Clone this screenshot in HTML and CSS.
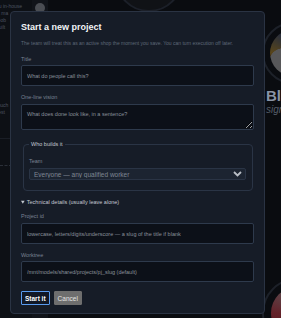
FILE: index.html
```html
<!DOCTYPE html>
<html lang="en">
<head>
    <meta charset="UTF-8">
    <meta name="viewport" content="width=device-width, initial-scale=1.0">
    <title>Start a new project</title>
    <link rel="stylesheet" href="styles.css">
</head>
<body>
    <div class="backdrop">
        <div class="side">
            <div class="side-text">
                <div>nu in-house</div>
                <div>ct ma</div>
                <div>reob</div>
                <div>built</div>
            </div>
            <div class="side-text lower">
                <div>touch</div>
                <div>ilest</div>
            </div>
            <div class="side-rule"></div>
            <div class="side-dash"></div>
        </div>
        <div class="rail">
            <div class="rail-dot"></div>
        </div>
        <div class="main">
            <div class="top-ring"></div>
            <div class="profile">
                <div class="profile-ring"><div class="profile-pic"></div></div>
                <div class="profile-name">Bla</div>
                <div class="profile-sub">sign</div>
            </div>
            <div class="bottom-ring"><div class="bottom-pic"></div></div>
        </div>
    </div>

    <div class="modal">
        <h2>Start a new project</h2>
        <p class="lead">The team will treat this as an active shop the moment you save. You can turn execution off later.</p>

        <form id="newProjectForm">
            <div class="field">
                <label for="title">Title</label>
                <input type="text" id="title" placeholder="What do people call this?">
            </div>

            <div class="field">
                <label for="vision">One-line vision</label>
                <textarea id="vision" placeholder="What does done look like, in a sentence?"></textarea>
            </div>

            <fieldset class="group">
                <legend>Who builds it</legend>
                <label for="team">Team</label>
                <div class="select-wrap">
                    <select id="team">
                        <option>Everyone — any qualified worker</option>
                    </select>
                    <svg class="chevron" width="9" height="6" viewBox="0 0 9 6">
                        <path d="M1 1 L4.5 4.5 L8 1" fill="none" stroke="#b9bec6" stroke-width="1.8"/>
                    </svg>
                </div>
            </fieldset>

            <details open>
                <summary>Technical details (usually leave alone)</summary>

                <div class="field tight">
                    <label for="projectId">Project id</label>
                    <input type="text" id="projectId" placeholder="lowercase, letters/digits/underscore — a slug of the title if blank">
                </div>

                <div class="field">
                    <label for="worktree">Worktree</label>
                    <input type="text" id="worktree" placeholder="/mnt/models/shared/projects/pj_slug (default)">
                </div>
            </details>

            <div class="actions">
                <button type="submit" class="btn-primary">Start it</button>
                <button type="button" class="btn-cancel">Cancel</button>
            </div>
        </form>
    </div>
</body>
</html>
```

FILE: styles.css
```css
html, body {
    margin: 0;
    height: 100%;
}
body {
    font-family: "Liberation Sans", Arial, sans-serif;
    background-color: #0a0c10;
    overflow: hidden;
    position: relative;
}

/* page behind the dialog, already dimmed */
.backdrop {
    display: flex;
    height: 100%;
}
.side {
    width: 32px;
    background-color: #0d1015;
    overflow: hidden;
}
.side-text {
    font-size: 5px;
    line-height: 7px;
    color: #4c5360;
    white-space: nowrap;
    margin-left: -4px;
    padding-top: 3px;
}
.side-text.lower {
    padding-top: 71px;
}
.side-rule {
    border-top: 1px solid #1a1e26;
    margin-top: 22px;
}
.side-dash {
    border-top: 1px dashed #2a2f38;
    margin-top: 26px;
    width: 12px;
}
.rail {
    width: 16px;
    background-color: #11141a;
}
.rail-dot {
    width: 10px;
    height: 10px;
    border-radius: 50%;
    background-color: #4a4d53;
    margin: 3px 0 0 3px;
}
.main {
    flex: 1;
    position: relative;
    overflow: hidden;
}
.top-ring {
    width: 64px;
    height: 64px;
    border-radius: 50%;
    border: 2px solid #1c2029;
    background-color: #101216;
    margin: -56px 0 0 67px;
}
.profile {
    position: absolute;
    left: 214px;
    top: 22px;
}
.profile-ring {
    width: 58px;
    height: 58px;
    border-radius: 50%;
    border: 2px solid #1d2129;
    display: flex;
    align-items: center;
    justify-content: center;
}
.profile-pic {
    width: 46px;
    height: 46px;
    border-radius: 50%;
    background: radial-gradient(circle at 30% 72%, #8a8a8a 0 32%, transparent 33%),
                conic-gradient(from 200deg, #5e1a1a, #8a6a22, #253a6a, #6e1818, #8f8f8f, #5e1a1a);
    opacity: 0.6;
}
.profile-name {
    font-size: 15px;
    font-weight: bold;
    color: #8993a6;
    margin-top: 3px;
    padding-left: 4px;
}
.profile-sub {
    font-size: 10px;
    font-style: italic;
    color: #555c68;
    padding-left: 4px;
}
.bottom-ring {
    position: absolute;
    left: 214px;
    top: 278px;
    width: 66px;
    height: 66px;
    border-radius: 50%;
    border: 2px solid #1d2129;
    display: flex;
    align-items: center;
    justify-content: center;
}
.bottom-pic {
    width: 52px;
    height: 52px;
    border-radius: 50%;
    background: conic-gradient(from 180deg, #6b1520, #8a2a34, #7b7b7b, #5a1018, #6b1520);
    opacity: 0.7;
}

/* dialog */
.modal {
    position: absolute;
    left: 10px;
    top: 11px;
    width: 255px;
    box-sizing: border-box;
    padding: 9px 10px 8px;
    background-color: #161c27;
    border: 1px solid #2a3343;
    border-radius: 4px;
}
.modal h2 {
    margin: 0;
    font-size: 9px;
    line-height: 12px;
    color: #f1f3f6;
}
.lead {
    margin: 6px 0 0;
    font-size: 5px;
    line-height: 8px;
    color: #5e6878;
}
.field {
    margin-top: 8px;
}
.field + .field {
    margin-top: 7px;
}
label, legend {
    display: block;
    font-size: 5.5px;
    line-height: 8px;
    color: #7a8393;
    margin-bottom: 2px;
}
input[type="text"], textarea {
    display: block;
    width: 100%;
    box-sizing: border-box;
    height: 21px;
    padding: 0 5px;
    background-color: #0c1018;
    border: 1px solid #2e3a4c;
    border-radius: 2px;
    font-family: inherit;
    font-size: 5.5px;
    color: #c8ccd2;
    outline: none;
}
textarea {
    height: 26px;
    padding-top: 6px;
    margin-top: 3px;
    resize: vertical;
}
::placeholder {
    color: #8b919b;
    opacity: 1;
}
.group {
    margin: 10px 1px 0 2px;
    padding: 0 6px 10px 5px;
    border: 1px solid #2a3445;
    border-radius: 4px;
}
.group legend {
    padding: 0 2px;
    margin: 0 0 9px;
    color: #c3c8d0;
}
.select-wrap {
    position: relative;
    margin-top: 3px;
}
select {
    display: block;
    width: 100%;
    height: 12px;
    padding: 0 4px;
    appearance: none;
    background-color: #1c2431;
    border: 1px solid #2a3445;
    border-radius: 2px;
    font-family: inherit;
    font-size: 6.5px;
    color: #7f8794;
}
.chevron {
    position: absolute;
    right: 4px;
    top: 3px;
}
details {
    margin-top: 7px;
}
summary {
    font-size: 5.5px;
    line-height: 8px;
    color: #c3c8d0;
    cursor: pointer;
}
details .field.tight {
    margin-top: 6px;
}
details .field.tight label {
    margin-bottom: 3px;
}
.actions {
    display: flex;
    gap: 4px;
    margin-top: 9px;
}
.actions button {
    height: 14px;
    padding: 0 3px;
    font-family: inherit;
    font-size: 6.5px;
    border-radius: 1px;
}
.btn-primary {
    background-color: #111826;
    border: 1px solid #5a9cf0;
    color: #ffffff;
    font-weight: bold;
}
.btn-cancel {
    background-color: #6e6e6e;
    border: 1px solid #6e6e6e;
    color: #e4e4e4;
    padding: 0 4px;
}
```
